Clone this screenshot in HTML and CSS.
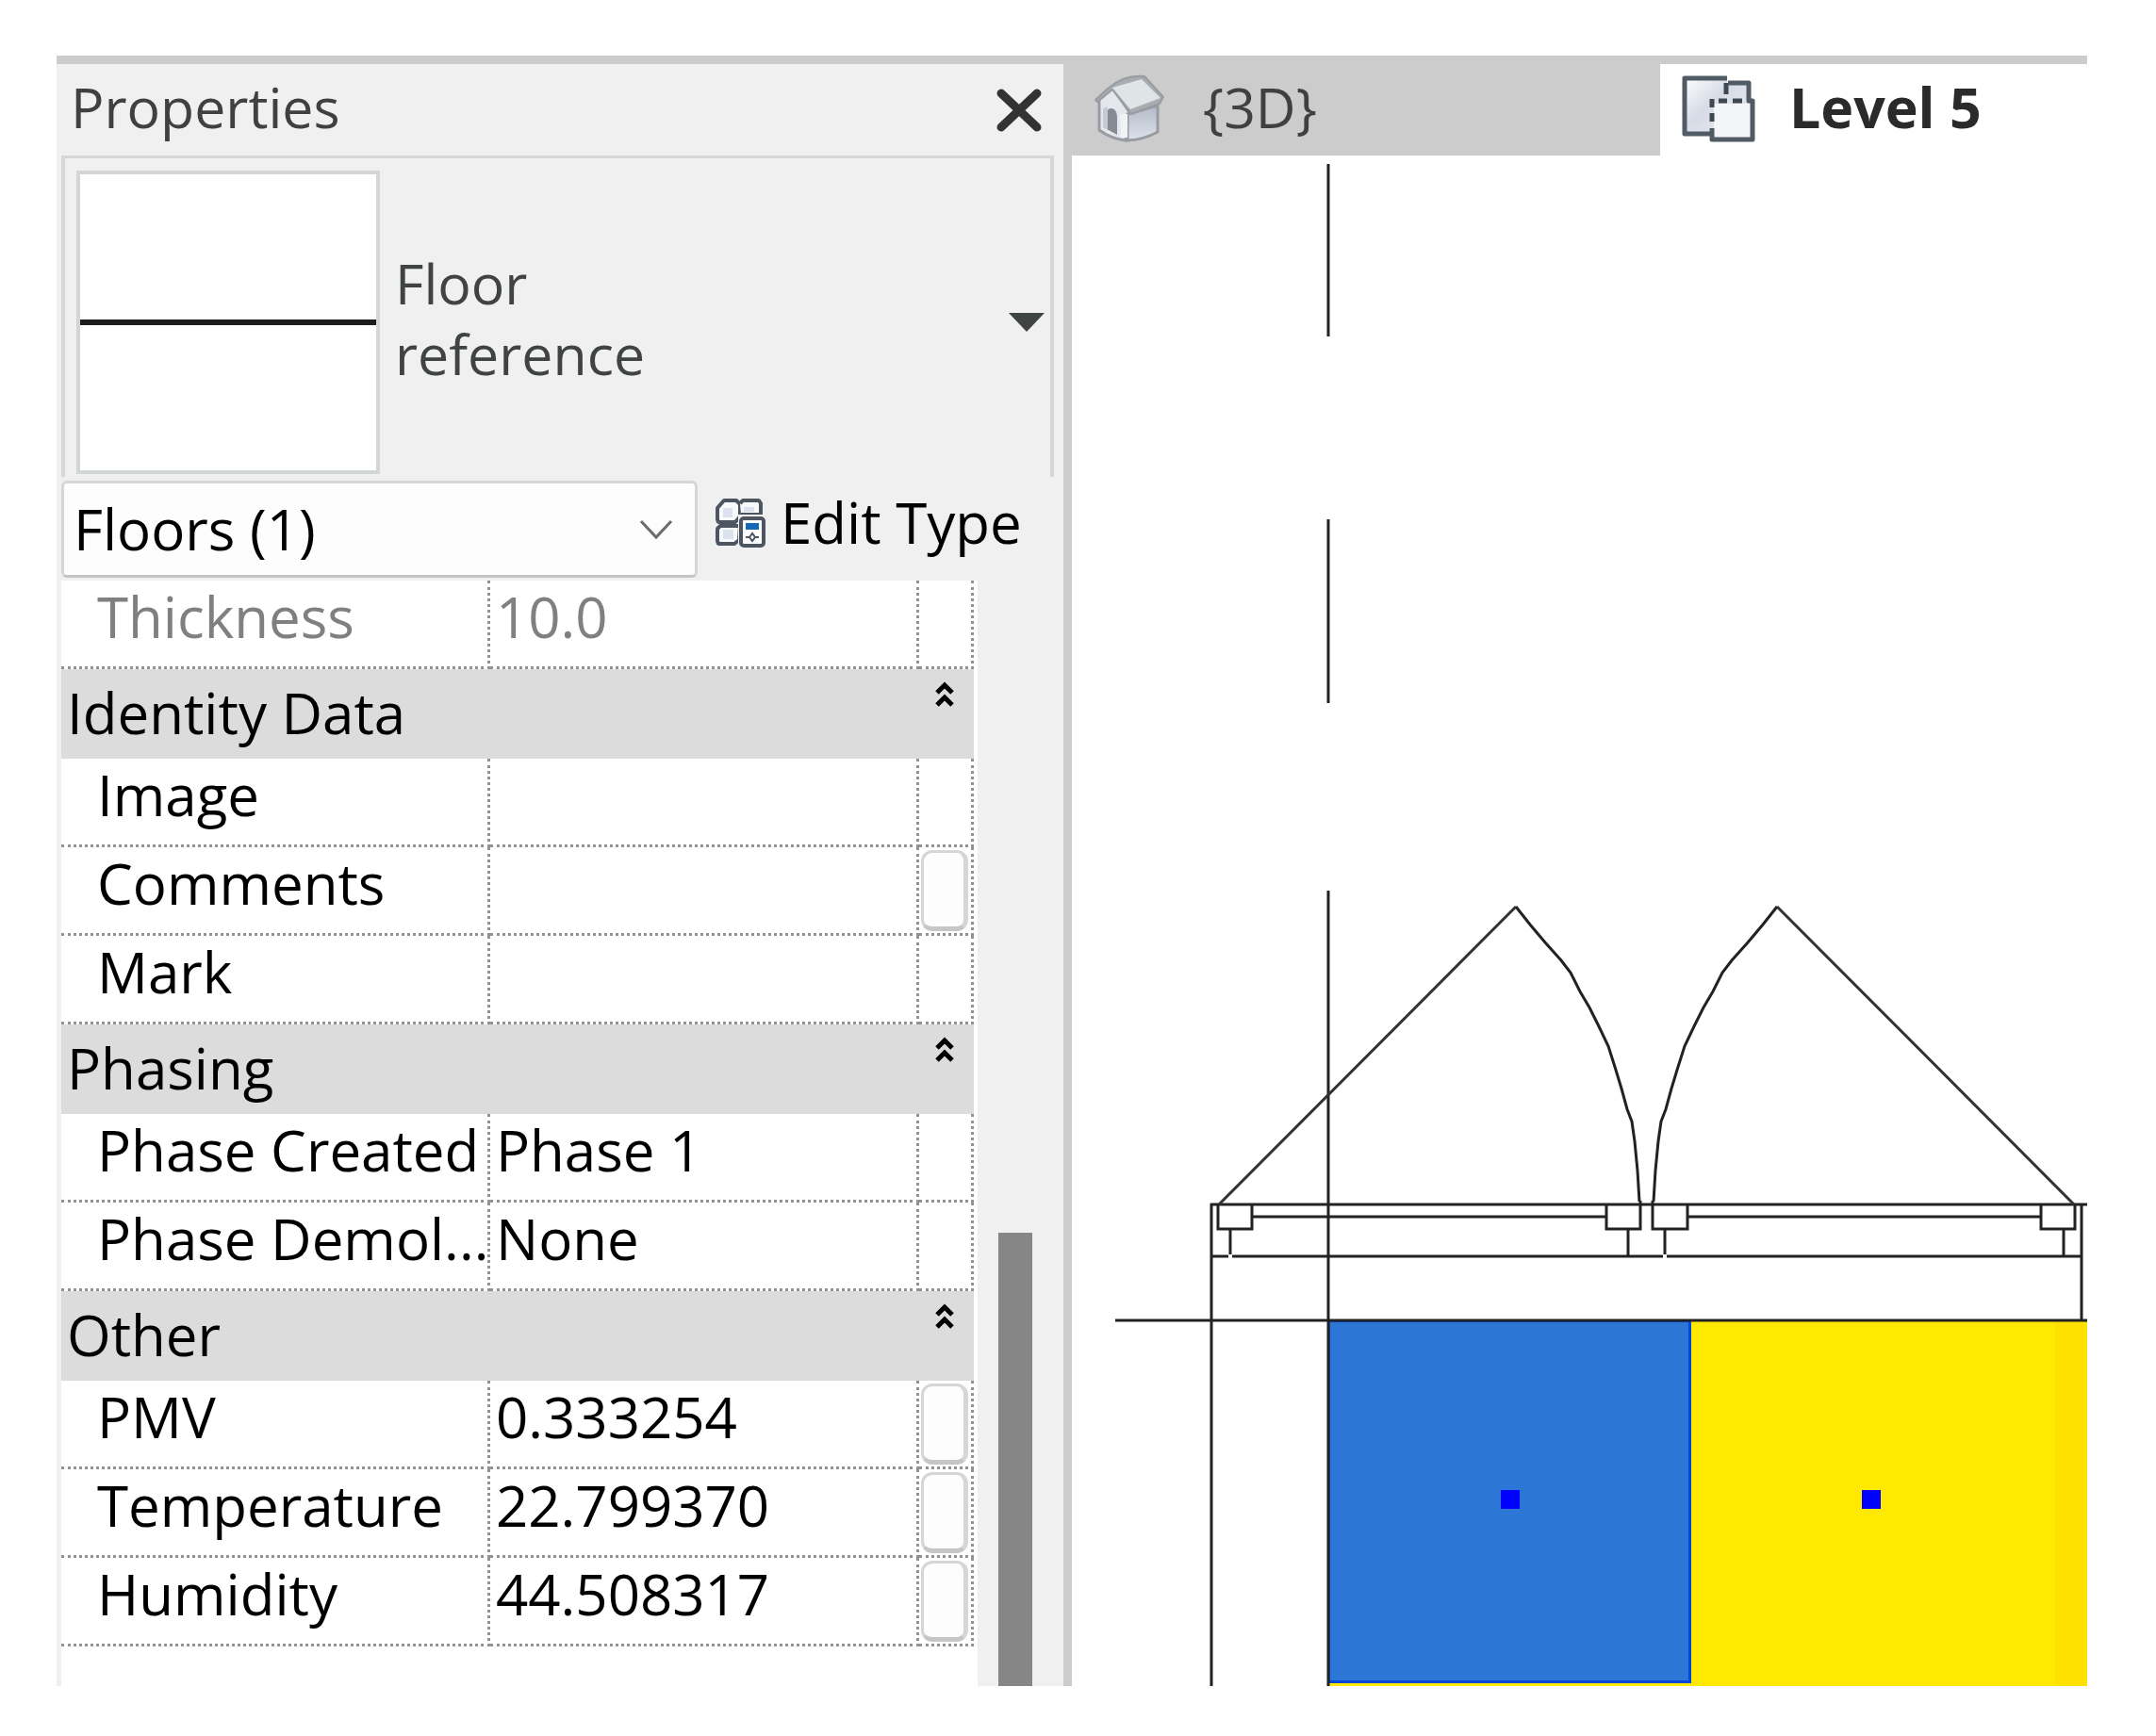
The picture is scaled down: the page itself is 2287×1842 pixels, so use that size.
FILE: index.html
```html
<!DOCTYPE html>
<html lang="en">
<head>
<meta charset="utf-8">
<meta name="viewport" content="width=device-width, initial-scale=1">
<title>Level 5 - Properties</title>
<link rel="stylesheet" href="styles.css">
</head>
<body>
<main class="workspace">
  <section class="panel" aria-label="Properties">
    <header class="panel-header">
      <h1 class="panel-title">Properties</h1>
      <button class="close" type="button" aria-label="Close">
        <svg width="48" height="46" viewBox="0 0 48 46" aria-hidden="true"><path d="M5 5 43 41M43 5 5 41" fill="none" stroke="#333" stroke-width="9" stroke-linecap="round"/></svg>
      </button>
    </header>

    <button class="type-picker" type="button">
      <span class="thumb"><span class="thumb-line"></span></span>
      <span class="type-name">Floor<br>reference</span>
      <svg class="type-arrow" width="38" height="20" viewBox="0 0 38 20" aria-hidden="true"><path d="M0 0H38L19 20Z" fill="#404344"/></svg>
    </button>

    <div class="filter-row">
      <div class="select-wrap">
        <select class="category" aria-label="Category">
          <option>Floors (1)</option>
        </select>
        <svg class="select-arrow" width="36" height="22" viewBox="0 0 36 22" aria-hidden="true"><path d="M2 2 18 19 34 2" fill="none" stroke="#6a6a6a" stroke-width="3"/></svg>
      </div>
      <button class="edit-type" type="button">
        <svg width="54" height="52" viewBox="0 0 54 52" aria-hidden="true">
          <g fill="#f7f9fb" stroke="#4d5660" stroke-width="4" stroke-linejoin="bevel">
            <path d="M3 10 10 2H23L27 6V19L22 25H4L3 22Z"/>
            <path d="M27 5 30 2H47L49 5V17H28"/>
            <path d="M27 29H6L3 32V45L4 48H21L26 44Z"/>
          </g>
          <path d="M9 10H19V20H9ZM31 9H42V14H31ZM9 33H20V43H9Z" fill="#dde3ee"/>
          <rect x="25" y="17" width="29" height="35" fill="#f0f0f0"/>
          <rect x="28" y="21" width="24" height="29" rx="3" fill="#fff" stroke="#4d5660" stroke-width="4"/>
          <rect x="33" y="26" width="14" height="7" fill="#1668b8"/>
          <path d="M33 41H37M43 41H47M37 41 40 37 43 41 40 45Z" fill="none" stroke="#4d5660" stroke-width="2"/>
        </svg>
        <span>Edit Type</span>
      </button>
    </div>

    <div class="scroll-area">
      <div class="grid-pane">
        <table class="props">
          <colgroup><col class="col-name"><col class="col-value"><col class="col-tool"></colgroup>
          <tbody>
            <tr class="muted"><th scope="row">Thickness</th><td><input type="text" value="10.0" aria-label="Thickness" readonly></td><td></td></tr>
          </tbody>
          <tbody>
            <tr class="group"><th colspan="2" scope="rowgroup">Identity Data</th><td><button class="fold" type="button" aria-label="Collapse Identity Data"><svg width="20" height="28" viewBox="0 0 20 28" aria-hidden="true"><path d="M2 12 10 4 18 12M2 25 10 17 18 25" fill="none" stroke="#000" stroke-width="5"/></svg></button></td></tr>
            <tr><th scope="row">Image</th><td><input type="text" aria-label="Image"></td><td></td></tr>
            <tr><th scope="row">Comments</th><td><input type="text" aria-label="Comments"></td><td><button class="tool" type="button" aria-label="Associate Comments"></button></td></tr>
            <tr><th scope="row">Mark</th><td><input type="text" aria-label="Mark"></td><td></td></tr>
          </tbody>
          <tbody>
            <tr class="group"><th colspan="2" scope="rowgroup">Phasing</th><td><button class="fold" type="button" aria-label="Collapse Phasing"><svg width="20" height="28" viewBox="0 0 20 28" aria-hidden="true"><path d="M2 12 10 4 18 12M2 25 10 17 18 25" fill="none" stroke="#000" stroke-width="5"/></svg></button></td></tr>
            <tr><th scope="row">Phase Created</th><td><input type="text" value="Phase 1" aria-label="Phase Created"></td><td></td></tr>
            <tr><th scope="row">Phase Demol...</th><td><input type="text" value="None" aria-label="Phase Demolished"></td><td></td></tr>
          </tbody>
          <tbody>
            <tr class="group"><th colspan="2" scope="rowgroup">Other</th><td><button class="fold" type="button" aria-label="Collapse Other"><svg width="20" height="28" viewBox="0 0 20 28" aria-hidden="true"><path d="M2 12 10 4 18 12M2 25 10 17 18 25" fill="none" stroke="#000" stroke-width="5"/></svg></button></td></tr>
            <tr><th scope="row">PMV</th><td><input type="text" value="0.333254" aria-label="PMV"></td><td><button class="tool" type="button" aria-label="Associate PMV"></button></td></tr>
            <tr><th scope="row">Temperature</th><td><input type="text" value="22.799370" aria-label="Temperature"></td><td><button class="tool" type="button" aria-label="Associate Temperature"></button></td></tr>
            <tr><th scope="row">Humidity</th><td><input type="text" value="44.508317" aria-label="Humidity"></td><td><button class="tool" type="button" aria-label="Associate Humidity"></button></td></tr>
          </tbody>
        </table>
      </div>
      <div class="scrollbar"><div class="scroll-thumb"></div></div>
    </div>
  </section>

  <section class="view" aria-label="Drawing area">
    <nav class="tabs">
      <button class="tab" type="button">
        <svg width="76" height="72" viewBox="0 0 76 72" aria-hidden="true">
          <defs>
            <linearGradient id="wall" x1="0" y1="0" x2="0" y2="1"><stop offset="0" stop-color="#b3bac8"/><stop offset="1" stop-color="#dde2ea"/></linearGradient>
          </defs>
          <path d="M6 27V59Q18 68 34 70L38 40 20 14Z" fill="#e4e8ee" stroke="#989ca2" stroke-width="3"/>
          <path d="M14 58V40Q16 34 22 37 25 40 25 46V64Z" fill="#868b92"/>
          <path d="M10 56V36L15 34V59Z" fill="#c6cbd3"/>
          <path d="M36 42 68 33V61Q54 69 36 70Z" fill="url(#wall)" stroke="#989ca2" stroke-width="3"/>
          <path d="M28 42H36V67H29Z" fill="#f1f4f7"/>
          <path d="M2 27 15 15Q32 0 54 2L74 24 70 31 40 42 20 16 4 29Z" fill="#a9adb2" stroke="#989ca2" stroke-width="2" stroke-linejoin="round"/>
          <path d="M20 14 51 5 71 25 39 37Z" fill="#dfe4e7"/>
        </svg>
        <span>{3D}</span>
      </button>
      <button class="tab tab-active" type="button" aria-current="page">
        <svg width="78" height="72" viewBox="0 0 78 72" aria-hidden="true">
          <defs>
            <linearGradient id="sheet" x1="0" y1="0" x2="1" y2="1"><stop offset="0" stop-color="#ffffff"/><stop offset=".4" stop-color="#d6dbe5"/><stop offset="1" stop-color="#eef0f5"/></linearGradient>
          </defs>
          <path d="M3 3H48V9H71V28H75V69H32V63H3Z" fill="url(#sheet)"/>
          <path d="M34 31H73V67H34Z" fill="#f3f5f8"/>
          <path d="M48 4H3V63H32M32 57V69H75V28H71V9H49" fill="none" stroke="#505b66" stroke-width="5" stroke-linejoin="round"/>
          <path d="M47 9V21M39 28H48M54 28H64M32 26V35M32 41V50" fill="none" stroke="#3e4851" stroke-width="5"/>
        </svg>
        <span>Level 5</span>
      </button>
    </nav>

    <svg class="plan" viewBox="1137 165 1077 1624" preserveAspectRatio="xMinYMin slice" role="img" aria-label="Floor plan of level 5">
      <rect x="1409" y="1402" width="805" height="387" fill="#ffe900"/>
      <rect x="2180" y="1402" width="34" height="387" fill="#ffe100"/>
      <rect x="1409" y="1402" width="385" height="384" fill="#0048d8"/>
      <rect x="1411" y="1403" width="380" height="380" fill="#2c76d6"/>
      <rect x="1592" y="1581" width="20" height="20" fill="#00f"/>
      <rect x="1975" y="1581" width="20" height="20" fill="#00f"/>

      <g fill="none" stroke="#222" stroke-width="3">
        <path d="M1409 174V357M1409 551V746M1409 945V1789"/>
        <path d="M1183 1401H2214M1285 1277V1789M2208 1278V1401"/>
        <path d="M1284 1278H2214M1328 1291H1704M1790 1291H2165"/>
        <path d="M1285 1333H1303M1307 1333H1764M1768 1333H2208"/>
        <path d="M1292 1278V1304H1328V1278M1704 1278V1304H1740V1274M1753 1274V1304H1790V1278M2165 1278V1304H2201V1278"/>
        <path d="M1305 1304V1331M1727 1304V1332M1766 1304V1331M2189 1304V1332"/>
        <path d="M1293 1278 1608 962M2200 1278 1885 962" stroke="#333"/>
        <path d="M1608 962 1623 981 1639 1000 1656 1019 1666 1032 1676 1052 1686 1069 1696 1089 1706 1110 1713 1132 1720 1155 1726 1177 1731 1190 1734 1211 1737 1242 1739 1275"/>
        <path d="M1885 962 1870 981 1854 1000 1837 1019 1827 1032 1817 1052 1807 1069 1797 1089 1787 1110 1780 1132 1773 1155 1767 1177 1762 1190 1759 1211 1756 1242 1754 1275"/>
      </g>
    </svg>
  </section>
</main>
</body>
</html>
```
FILE: styles.css
```css
* {
  box-sizing: border-box;
}

body {
  margin: 0;
  min-height: 100vh;
  display: flex;
  padding: 59px 73px 53px 60px;
  background: #fff;
  color: #000;
  font: 60px/75px "Open Sans", "Noto Sans", sans-serif;
}

button,
input,
select {
  margin: 0;
  padding: 0;
  border: 0;
  background: none;
  color: inherit;
  font: inherit;
}

svg {
  display: block;
  flex: none;
}

.workspace {
  flex: 1;
  display: grid;
  grid-template-columns: 1068fr 1086fr;
  border-top: 9px solid #ccc;
}

/* Properties palette */

.panel {
  display: flex;
  flex-direction: column;
  min-width: 0;
  padding-left: 5px;
  background: #f0f0f0;
}

.panel-header {
  display: flex;
  align-items: center;
  justify-content: space-between;
  height: 97px;
  padding: 0 23px 0 10px;
  color: #404040;
}

.panel-title {
  margin: 0;
  padding-bottom: 6px;
  font-size: 59px;
  font-weight: 400;
}

.type-picker {
  display: flex;
  align-items: center;
  gap: 16px;
  margin-right: 10px;
  padding: 13px 6px 3px 12px;
  border: solid #d5d7d8;
  border-width: 3px 4px 0;
  color: #404344;
  font-size: 59px;
  text-align: left;
}

.thumb {
  display: flex;
  align-items: center;
  width: 322px;
  height: 322px;
  border: 4px solid #d3d6d7;
  background: #fff;
}

.thumb-line {
  width: 100%;
  height: 6px;
  background: #1c1c1c;
}

.type-name {
  flex: 1;
  padding-bottom: 8px;
}

.filter-row {
  display: flex;
  gap: 18px;
  margin: 4px 10px 3px 0;
}

.select-wrap {
  flex: 1;
  display: grid;
  align-items: center;
}

.category,
.select-arrow {
  grid-area: 1 / 1;
}

.category {
  width: 100%;
  height: 103px;
  padding: 0 80px 0 10px;
  border: 3px solid #d6d6d6;
  border-bottom-color: #c4c4c4;
  border-radius: 6px;
  background: #fdfdfd;
  appearance: none;
}

.select-arrow {
  justify-self: end;
  margin-right: 26px;
  pointer-events: none;
}

.edit-type {
  flex: 0 0 360px;
  display: flex;
  align-items: center;
  gap: 16px;
  padding-bottom: 14px;
  white-space: nowrap;
}

/* Property grid */

.scroll-area {
  flex: 1;
  display: flex;
  background: #fff;
}

.grid-pane {
  flex: 1;
  padding-right: 4px;
}

.props {
  width: 100%;
  table-layout: fixed;
  border-collapse: separate;
  border-spacing: 0;
}

.col-name,
.col-value {
  width: 47%;
}

.col-tool {
  width: 6%;
}

.props th,
.props td {
  height: 94px;
  padding: 0;
  border: dotted #929292;
  border-width: 0 3px 3px 0;
  font-weight: 400;
  text-align: left;
  vertical-align: middle;
  white-space: nowrap;
}

.props th {
  padding: 0 0 14px 38px;
}

.props input {
  display: block;
  width: 100%;
  height: 75px;
  margin-bottom: 14px;
  padding-left: 6px;
}

.muted {
  color: #808080;
}

.props .group th,
.props .group td {
  height: 95px;
  padding: 0;
  border: 0;
  background: #dcdcdc;
}

.props .group th {
  padding: 0 0 2px 6px;
}

.props .group td {
  padding-right: 4px;
  vertical-align: top;
}

.fold {
  display: block;
  margin: 13px auto 0;
}

.tool {
  display: block;
  width: 50px;
  height: 86px;
  margin: 0 auto;
  border: 3px solid #d6d6d6;
  border-width: 3px 5px 5px 3px;
  border-bottom-color: #c6c6c6;
  border-radius: 12px;
  background: #fdfdfd;
}

.scrollbar {
  flex: 0 0 91px;
  display: flex;
  flex-direction: column;
  justify-content: flex-end;
  padding: 0 33px 0 22px;
  background: #f0f0f0;
}

.scroll-thumb {
  height: 41%;
  background: #868686;
}

/* Drawing area */

.view {
  display: flex;
  flex-direction: column;
  min-width: 0;
  border-left: 9px solid #ccc;
}

.tabs {
  display: grid;
  grid-template-columns: 624fr 453fr;
  height: 97px;
  background: #ccc;
}

.tab {
  display: flex;
  align-items: center;
  gap: 40px;
  padding: 0 23px 4px;
  color: #404040;
  font-size: 59px;
  white-space: nowrap;
}

.tab span {
  padding-bottom: 2px;
}

.tab-active {
  gap: 36px;
  background: #fff;
  color: #2a2a2a;
  font-weight: 700;
}

.plan {
  flex: 1 0 0;
  width: 100%;
  min-height: 0;
}
```
